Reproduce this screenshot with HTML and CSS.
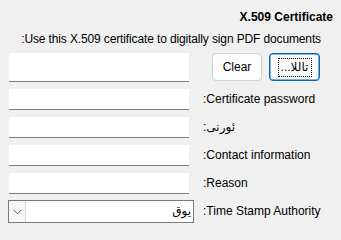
FILE: index.html
```html
<!DOCTYPE html>
<html>
<head>
<meta charset="utf-8">
<link rel="stylesheet" href="styles.css">
</head>
<body>
<div class="dlg" dir="rtl">
  <div class="title">X.509 Certificate</div>
  <div class="desc">Use this X.509 certificate to digitally sign PDF documents:</div>
  <div class="form">
    <div class="btns">
      <button class="btn primary"><span class="focus">تاللا...</span></button>
      <button class="btn">Clear</button>
    </div>
    <div class="field big"></div>
    <div class="lbl">Certificate password:</div><div class="field"></div>
    <div class="lbl">ئورنى:</div><div class="field"></div>
    <div class="lbl">Contact information:</div><div class="field"></div>
    <div class="lbl">Reason:</div><div class="field"></div>
    <div class="lbl">Time Stamp Authority:</div>
    <div class="combo">
      <span class="val">يوق</span>
      <span class="arrow"><svg width="9" height="6" viewBox="0 0 9 6"><path d="M0.5 0.8 L4.5 4.8 L8.5 0.8" fill="none" stroke="#606060" stroke-width="1"/></svg></span>
    </div>
  </div>
</div>
</body>
</html>
```
FILE: styles.css
```css
html, body {
  margin: 0;
  padding: 0;
  background: #f0f0f0;
}
.dlg {
  width: 341px;
  height: 231px;
  box-sizing: border-box;
  font-family: "Liberation Sans", "DejaVu Sans", sans-serif;
  font-size: 12px;
  color: #000;
  padding-top: 9px;
  white-space: nowrap;
}
.title {
  font-weight: bold;
  line-height: 16px;
  height: 16px;
  padding-right: 8px;
}
.desc {
  line-height: 16px;
  margin-top: 6px;
  padding-right: 20px;
  letter-spacing: -0.13px;
}
.form {
  display: grid;
  grid-template-columns: 130px 180px;
  grid-template-rows: 29px 21px 21px 21px 21px 23px;
  column-gap: 14px;
  row-gap: 7px;
  margin-top: 6px;
  padding-left: 9px;
  padding-right: 8px;
}
.btns {
  display: flex;
  gap: 7px;
  padding-right: 13px;
  align-items: flex-start;
}
.btn {
  font: inherit;
  height: 28px;
  width: 50px;
  padding: 0;
  background: #fdfdfd;
  border: 1px solid #d0d0d0;
  border-radius: 4px;
  color: #000;
  display: flex;
  align-items: center;
  justify-content: center;
}
.btn.primary {
  width: 51px;
  border-color: #0067c0;
  box-shadow: inset 0 0 0 0.5px #0067c0;
}
.focus {
  display: block;
  width: 32px;
  height: 17px;
  line-height: 17px;
  border: 1px dotted #000;
  text-align: center;
}
.lbl {
  text-align: left;
  line-height: 21px;
}
.field {
  background: #fff;
  border-bottom: 1px solid #808080;
  box-sizing: border-box;
}
.combo {
  display: flex;
  background: #fff;
  border: 1px solid #7a7a7a;
  box-sizing: border-box;
  margin-left: -1px;
  margin-right: -5px;
  margin-top: -1px;
  height: 23px;
}
.val {
  flex: 1;
  line-height: 21px;
  padding-right: 2px;
}
.arrow {
  width: 16px;
  background: #f7f7f7;
  border-right: 1px solid #dadada;
  display: flex;
  align-items: center;
  justify-content: center;
}
```
